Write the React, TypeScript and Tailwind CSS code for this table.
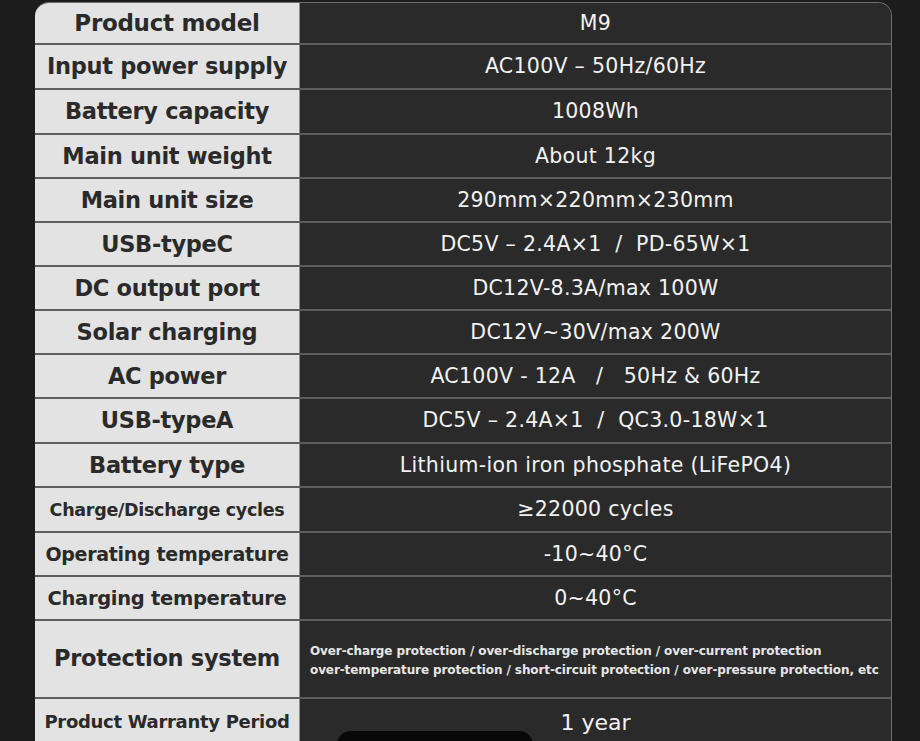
import React from "react";

type Row = { label: string; value: React.ReactNode; h: string; labelSize: string };

const ROWS: Row[] = [
  { label: "Product model", value: "M9", h: "h-[42px]", labelSize: "text-[23px]" },
  { label: "Input power supply", value: "AC100V – 50Hz/60Hz", h: "h-[45px]", labelSize: "text-[22.5px]" },
  { label: "Battery capacity", value: "1008Wh", h: "h-[45px]", labelSize: "text-[22.5px]" },
  { label: "Main unit weight", value: "About 12kg", h: "h-[44px]", labelSize: "text-[22.5px]" },
  { label: "Main unit size", value: "290mm×220mm×230mm", h: "h-[44px]", labelSize: "text-[22.5px]" },
  { label: "USB-typeC", value: "DC5V – 2.4A×1  /  PD-65W×1", h: "h-[44px]", labelSize: "text-[22.5px]" },
  { label: "DC output port", value: "DC12V-8.3A/max 100W", h: "h-[44px]", labelSize: "text-[22.5px]" },
  { label: "Solar charging", value: "DC12V~30V/max 200W", h: "h-[44px]", labelSize: "text-[22.5px]" },
  { label: "AC power", value: "AC100V - 12A   /   50Hz & 60Hz", h: "h-[44px]", labelSize: "text-[22.5px]" },
  { label: "USB-typeA", value: "DC5V – 2.4A×1  /  QC3.0-18W×1", h: "h-[45px]", labelSize: "text-[22.5px]" },
  { label: "Battery type", value: "Lithium-ion iron phosphate (LiFePO4)", h: "h-[44px]", labelSize: "text-[22.5px]" },
  { label: "Charge/Discharge cycles", value: "≥22000 cycles", h: "h-[45px]", labelSize: "text-[17.5px]" },
  { label: "Operating temperature", value: "-10~40°C", h: "h-[44px]", labelSize: "text-[19px]" },
  { label: "Charging temperature", value: "0~40°C", h: "h-[44px]", labelSize: "text-[19.5px]" },
];

export default function App() {
  return (
    <div className="relative w-[920px] h-[741px] overflow-hidden bg-[#1c1c1c] font-['DejaVu_Sans',sans-serif]">
      <div className="ml-[35px] mt-[2px] w-[857px] rounded-t-[14px] overflow-hidden border-t border-r border-[#6f6f6f]">
        {ROWS.map((r, i) => (
          <div key={i} className={`grid grid-cols-[265px_1fr] ${r.h} border-b-2 border-[#5e5e5e]`}>
            <div
              className={`flex items-center justify-center pt-[1px] bg-[#e3e3e3] border-r border-[#8a8a8a] font-bold text-[#2a2a2a] tracking-[-0.3px] whitespace-nowrap ${r.labelSize}`}
            >
              {r.label}
            </div>
            <div className="flex items-center justify-center bg-[#2a2a2a] text-[20.5px] tracking-[0.3px] text-[#f2f2f2] whitespace-pre">
              {r.value}
            </div>
          </div>
        ))}
        <div className="grid grid-cols-[265px_1fr] h-[78px] border-b-2 border-[#5e5e5e]">
          <div className="flex items-center justify-center bg-[#e3e3e3] border-r border-[#8a8a8a] text-[22.5px] font-bold text-[#2a2a2a] tracking-[-0.3px]">
            Protection system
          </div>
          <div className="flex flex-col justify-center pt-[3px] bg-[#2a2a2a] pl-[10px] text-[12px] font-bold leading-[19px] text-[#e6e6e6] whitespace-nowrap tracking-[-0.1px]">
            <span>Over-charge protection / over-discharge protection / over-current protection</span>
            <span>over-temperature protection / short-circuit protection / over-pressure protection, etc</span>
          </div>
        </div>
        <div className="grid grid-cols-[265px_1fr] h-[60px]">
          <div className="flex items-start justify-center pt-[9px] bg-[#e3e3e3] border-r border-[#8a8a8a] text-[18px] font-bold text-[#2a2a2a] tracking-[-0.3px] whitespace-nowrap">
            Product Warranty Period
          </div>
          <div className="flex items-start justify-center pt-[7px] bg-[#2a2a2a] text-[22px] text-[#f2f2f2]">
            1 year
          </div>
        </div>
      </div>
      <div className="absolute left-[337px] top-[731px] w-[196px] h-[20px] rounded-t-[14px] bg-[#080808]" />
    </div>
  );
}
